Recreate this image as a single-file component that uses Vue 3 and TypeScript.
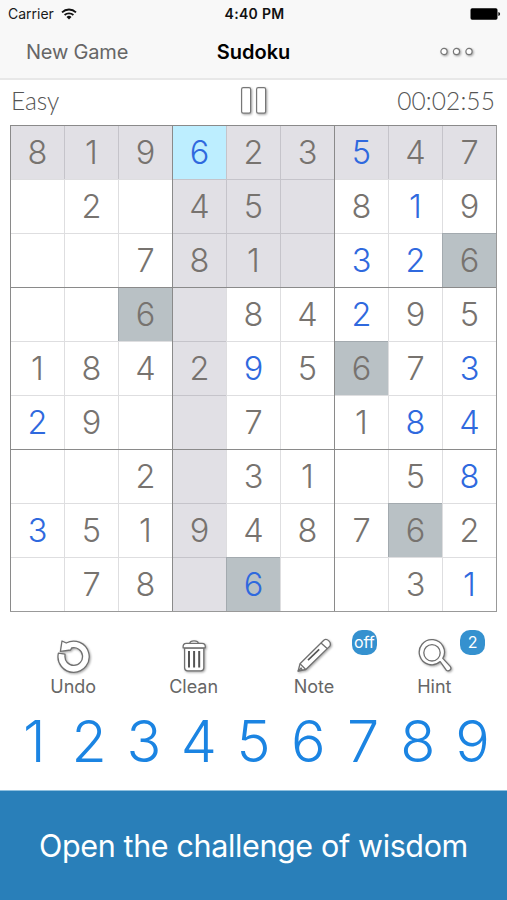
<script setup lang="ts">
type Tone = 'given' | 'entry'
interface Cell {
  key: string
  value: string
  tone: Tone
  state: string
}

// A trailing "*" marks a number entered by the player, "." is an empty cell.
const rows: string[] = [
  '8 1 9 6* 2 3 5* 4 7',
  '. 2 . 4 5 . 8 1* 9',
  '. . 7 8 1 . 3* 2* 6',
  '. . 6 . 8 4 2* 9 5',
  '1 8 4 2 9* 5 6 7 3*',
  '2* 9 . . 7 . 1 8* 4*',
  '. . 2 . 3 1 . 5 8*',
  '3* 5 1 9 4 8 7 6 2',
  '. 7 8 . 6* . . 3 1*',
]
const selected = { row: 0, col: 3 }

const cells: Cell[] = rows.flatMap((line, r) =>
  line.split(' ').map((token, c) => {
    const value = token.replace('*', '').replace('.', '')
    const sameBox = r < 3 && c >= 3 && c < 6
    let state = ''
    if (r === selected.row && c === selected.col) state = 'selected'
    else if (value === '6') state = 'same'
    else if (r === selected.row || c === selected.col || sameBox) state = 'peer'
    return { key: `${r}-${c}`, value, tone: token.endsWith('*') ? 'entry' : 'given', state }
  }),
)

const boxes = [0, 1, 2, 3, 4, 5, 6, 7, 8]
const digits = [1, 2, 3, 4, 5, 6, 7, 8, 9]
</script>

<template>
  <main class="screen">
    <header class="top">
      <div class="status">
        <div class="carrier">
          <span>Carrier</span>
          <svg class="wifi" width="16" height="12" viewBox="0 0 16 12">
            <g fill="none" stroke="#111" stroke-width="1.8">
              <path d="M1 4.3a10.2 10.2 0 0 1 14 0" />
              <path d="M3.6 7a6.5 6.5 0 0 1 8.8 0" />
            </g>
            <path d="M8 11.6 5.5 9a3.6 3.6 0 0 1 5 0z" fill="#111" />
          </svg>
        </div>
        <span class="clock">4:40 PM</span>
        <svg class="battery" width="31" height="12" viewBox="0 0 31 12">
          <rect x="0.5" y="0.3" width="27" height="11.4" rx="1.6" />
          <path d="M28.4 4v4q1.7-.6 1.7-2t-1.7-2z" />
        </svg>
      </div>
      <nav class="nav">
        <span class="new-game">New Game</span>
        <h1 class="title">Sudoku</h1>
        <svg class="more" width="36" height="12" viewBox="0 0 36 12">
          <g fill="#fff" stroke="#777" stroke-width="1.2">
            <circle cx="5" cy="5.5" r="3.1" />
            <circle cx="17.5" cy="5.5" r="3.1" />
            <circle cx="30" cy="5.5" r="3.1" />
          </g>
        </svg>
      </nav>
    </header>

    <section class="info">
      <span class="level">Easy</span>
      <svg class="pause" width="32" height="32" viewBox="0 0 32 32">
        <g fill="#fff" stroke="#777" stroke-width="1.2">
          <rect x="3.6" y="2.6" width="9" height="25.6" rx="1.6" />
          <rect x="18.6" y="2.6" width="9" height="25.6" rx="1.6" />
        </g>
      </svg>
      <span class="timer">00:02:55</span>
    </section>

    <section class="board">
      <div v-for="cell in cells" :key="cell.key" class="cell" :class="[cell.tone, cell.state]">
        {{ cell.value }}
      </div>
      <div class="boxes">
        <i v-for="b in boxes" :key="b" class="box"></i>
      </div>
    </section>

    <section class="tools">
      <div class="tool">
        <svg class="icon" width="40" height="38" viewBox="0 0 40 38">
          <path
            d="M9 4 7.4 14.4 17.6 13 18.6 11A8.8 8.8 0 1 1 12 18.6L12 17.2 5.4 16.2A15.6 15.6 0 1 0 13.2 6z"
          />
        </svg>
        <span class="undo">Undo</span>
      </div>
      <div class="tool">
        <svg class="icon" width="40" height="38" viewBox="0 0 40 38">
          <path d="M15.8 6.5Q16 3.8 20 3.8T24.4 6.5" />
          <path d="M10.6 11v19.8q0 3 3 3h13.2q3 0 3-3V11z" />
          <path d="M9.2 10.8q-.6-4.4 3.2-4.4h15.6q3.8 0 3.2 4.4z" />
          <path class="dark" d="M15 14v16.6M20.1 14v16.6M25.2 14v16.6" />
        </svg>
        <span>Clean</span>
      </div>
      <div class="tool">
        <svg class="icon" width="40" height="38" viewBox="0 0 40 38">
          <path d="M4.2 34 6 26.8 29.8 3.2q2.4-1.8 5 .7t1 5.2L11.8 32.5z" />
          <path d="M6 26.8l5.8 5.7M27 6l6.2 5.6M4.2 34l2.9-3 1 1.8z" />
          <path class="dark thin" d="M14 23.2 25.2 12.4" />
        </svg>
        <span>Note</span>
        <b class="badge off">off</b>
      </div>
      <div class="tool">
        <svg class="icon" width="40" height="38" viewBox="0 0 40 38">
          <path
            d="M26.2 24.6A12.6 12.6 0 1 1 28.8 21.4L36.2 29.4q1.6 2-.2 3.6t-3.7.2z"
          />
          <circle cx="18" cy="15.8" r="8.2" />
        </svg>
        <span>Hint</span>
        <b class="badge count">2</b>
      </div>
    </section>

    <section class="pad">
      <span v-for="d in digits" :key="d">{{ d }}</span>
    </section>

    <footer class="banner"><span>Open the challenge of wisdom</span></footer>
  </main>
</template>

<style>
body {
  margin: 0;
  background: #fff;
}
</style>

<style scoped>
.screen {
  width: 507px;
  height: 900px;
  display: flex;
  flex-direction: column;
  overflow: hidden;
  background: #fff;
  font-family: Inter, 'Liberation Sans', sans-serif;
  color: #666;
}
.top {
  height: 78px;
  flex: none;
  background: #f8f8f8;
  border-bottom: 2px solid #e8e8e8;
  box-sizing: content-box;
}
.status {
  height: 27px;
  display: grid;
  grid-template-columns: 1fr auto 1fr;
  align-items: center;
  padding: 0 6px 0 8px;
  font-size: 14px;
  color: #1a1a1a;
}
.carrier {
  display: flex;
  align-items: center;
  gap: 7px;
}
.clock {
  font-weight: 600;
  letter-spacing: 0.3px;
  color: #111;
}
.battery {
  justify-self: end;
}
.nav {
  height: 50px;
  display: grid;
  grid-template-columns: 1fr auto 1fr;
  align-items: center;
  padding: 0 32px 0 26px;
}
.new-game {
  font-size: 20px;
  letter-spacing: -0.2px;
}
.title {
  margin: 0 0 0 6px;
  font-size: 20px;
  font-weight: 600;
  color: #000;
}
.more {
  justify-self: end;
}
.more,
.pause,
.icon {
  filter: drop-shadow(1px 1.5px 1px rgba(0, 0, 0, 0.35));
}
.info {
  height: 45px;
  flex: none;
  box-sizing: border-box;
  display: grid;
  grid-template-columns: 1fr auto 1fr;
  align-items: center;
  padding: 0 12px 4px 11px;
  font-family: Lato, sans-serif;
  font-size: 24.5px;
  font-weight: 300;
  color: #555;
}
.pause {
  margin-left: 2px;
}
.timer {
  justify-self: end;
  letter-spacing: 0.1px;
}
.board {
  position: relative;
  width: 487px;
  height: 487px;
  flex: none;
  margin: 0 0 0 10px;
  display: grid;
  grid-template: repeat(9, 54px) / repeat(9, 54px);
}
.cell {
  box-sizing: border-box;
  border-left: 1px solid rgba(60, 60, 70, 0.17);
  border-top: 1px solid rgba(60, 60, 70, 0.17);
  display: flex;
  align-items: center;
  justify-content: center;
  font-size: 32.5px;
  font-weight: 300;
  color: #77736f;
}
.entry {
  color: #2f69de;
}
.peer {
  background: #e1e0e5;
}
.same {
  background: #b9c1c5;
}
.selected {
  background: #bdeeff;
}
.boxes {
  position: absolute;
  inset: 0;
  display: grid;
  grid-template: repeat(3, 162px) / repeat(3, 162px);
  border-right: 1px solid #999;
  border-bottom: 1px solid #999;
}
.box {
  border-left: 1px solid #8a8a8a;
  border-top: 1px solid #8a8a8a;
}
.tools {
  height: 91px;
  flex: none;
  box-sizing: border-box;
  padding: 25px 12px 0 13px;
  display: grid;
  grid-template-columns: repeat(4, 120.4px);
}
.tool {
  position: relative;
  display: flex;
  flex-direction: column;
  align-items: center;
  font-size: 18px;
  line-height: 23px;
}
.icon {
  fill: #fff;
  stroke: #707070;
  stroke-width: 1.3;
  stroke-linejoin: round;
}
.dark {
  stroke: #555;
  stroke-width: 2;
}
.thin {
  stroke-width: 1.6;
}
.badge {
  position: absolute;
  left: 98px;
  top: -7px;
  width: 25px;
  height: 25px;
  border-radius: 10px;
  background: #3591cf;
  color: #fff;
  font-size: 16px;
  font-weight: 400;
  line-height: 25px;
  text-align: center;
}
.count {
  left: 86px;
}
.pad {
  height: 87px;
  flex: none;
  box-sizing: border-box;
  padding: 0 7px 12px;
  display: grid;
  grid-template-columns: repeat(9, 1fr);
  align-items: center;
  justify-items: center;
  font-size: 57.5px;
  font-weight: 300;
  color: #1b84e2;
}
.banner {
  flex: 1;
  border-top: 1px solid #8fc0df;
  background: #297fb9;
  color: #fff;
  display: flex;
  align-items: center;
  justify-content: center;
  font-size: 30.5px;
  letter-spacing: -0.37px;
}
</style>
